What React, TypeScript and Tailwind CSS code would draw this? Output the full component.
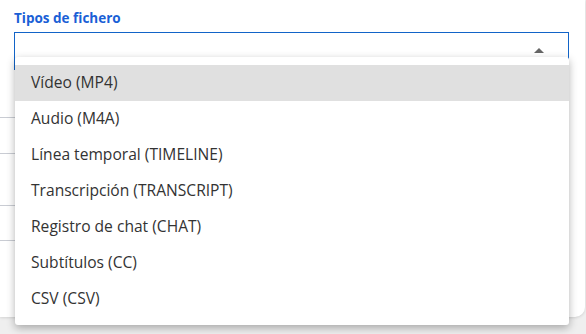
const OPTIONS = [
  "Vídeo (MP4)",
  "Audio (M4A)",
  "Línea temporal (TIMELINE)",
  "Transcripción (TRANSCRIPT)",
  "Registro de chat (CHAT)",
  "Subtítulos (CC)",
  "CSV (CSV)",
];

export default function App() {
  const active = 0;
  return (
    <div
      className="h-[334px] w-[586px] overflow-hidden bg-[#efefef]"
      style={{ fontFamily: '"Open Sans", "Noto Sans", sans-serif' }}
    >
      <div className="relative h-[317px] w-[585px] rounded-br-[10px] bg-white shadow-[0_1px_3px_rgba(0,0,0,0.12)]">
        <div className="pl-[14px] pr-[16px] pt-[9px]">
          <label className="block text-[13.5px] font-bold leading-[18px] text-[#1a5fd6]">
            Tipos de fichero
          </label>
          <div className="mt-[5px] flex h-[38px] items-center justify-end border border-[#1264c8] pr-[24px]">
            <span className="mb-[2px] block h-0 w-0 border-x-[5px] border-b-[5px] border-x-transparent border-b-[#666]" />
          </div>
        </div>

        {/* form fields behind the open menu */}
        <div className="mt-[47px] ml-[-10px] mr-[16px] h-[37px] border border-[#c9ccd3]" />
        <div className="mt-[51px] ml-[-10px] mr-[16px] h-[36px] border border-[#c9ccd3]" />
        <div className="mt-[31px] flex justify-end pr-[16px]">
          <div className="h-[11px] w-[80px] rounded-[3px] bg-[#1f5fd8]" />
        </div>

        <ul className="absolute left-[15px] top-[57px] w-[554px] rounded-[3px] bg-white py-[8px] shadow-[0_3px_8px_rgba(0,0,0,0.3)]">
          {OPTIONS.map((o, i) => (
            <li
              key={o}
              className={`flex h-[36px] items-center px-[16px] text-[15.6px] text-[#333] ${
                i === active ? "bg-[#e0e0e0]" : ""
              }`}
            >
              {o}
            </li>
          ))}
        </ul>
      </div>
    </div>
  );
}
